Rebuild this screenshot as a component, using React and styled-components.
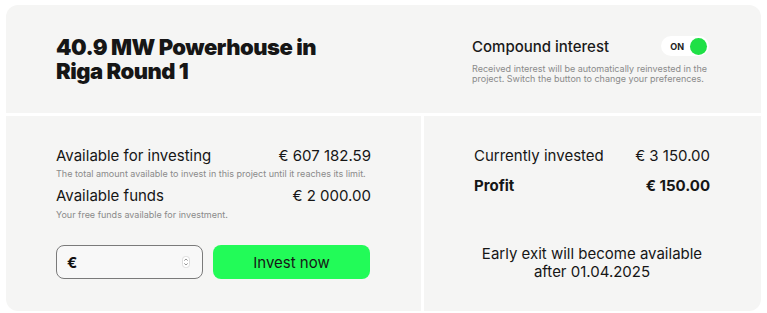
import React, { useState } from "react";
import styled, { createGlobalStyle } from "styled-components";

const GlobalStyle = createGlobalStyle`
  body {
    margin: 0;
    background: #ffffff;
    font-family: "Inter", "Liberation Sans", sans-serif;
    color: #111111;
  }
  * {
    box-sizing: border-box;
  }
`;

const Page = styled.div`
  padding: 5px 6px;
`;

const Card = styled.div`
  display: grid;
  grid-template-columns: 415px 337px;
  grid-template-rows: 108px 195px;
  gap: 3px;
  width: 755px;
  border-radius: 12px;
  overflow: hidden;
`;

const Panel = styled.div`
  background: #f5f5f4;
`;

const TopPanel = styled(Panel)`
  grid-column: 1 / 3;
  display: flex;
  padding: 30px 0 0 50px;
`;

const Title = styled.h1`
  width: 416px;
  margin: 0;
  font-family: "Inter", sans-serif;
  font-weight: 900;
  font-size: 22px;
  line-height: 24px;
  letter-spacing: -0.5px;
  color: #161616;
`;

const Compound = styled.div`
  width: 237px;
  padding-top: 1px;
`;

const CompoundHead = styled.div`
  display: flex;
  align-items: center;
  justify-content: space-between;
`;

const CompoundLabel = styled.span`
  font-size: 15px;
  font-weight: 500;
  color: #1a1a1a;
`;

const Toggle = styled.button`
  display: flex;
  align-items: center;
  gap: 6px;
  height: 20px;
  padding: 0 2px 0 9px;
  border: none;
  border-radius: 10px;
  background: #ffffff;
  font-family: "Inter", sans-serif;
  font-size: 9px;
  font-weight: 700;
  color: #222;
  cursor: pointer;
`;

const Knob = styled.span`
  width: 17px;
  height: 17px;
  border-radius: 50%;
  background: ${(p) => (p.$on ? "#1fe046" : "#c8c8c8")};
`;

const Hint = styled.p`
  margin: ${(p) => p.$gap || "6px"} 0 0;
  font-size: 9px;
  line-height: 10px;
  white-space: nowrap;
  color: #8a8a8a;
`;

const LeftPanel = styled(Panel)`
  padding: 29px 50px 0 50px;
`;

const RightPanel = styled(Panel)`
  display: flex;
  flex-direction: column;
  padding: 29px 51px 0 50px;
`;

const Row = styled.div`
  display: flex;
  justify-content: space-between;
  align-items: center;
  height: 20px;
  margin-top: ${(p) => p.$mt || "0"};
  font-size: 15px;
  font-weight: ${(p) => (p.$bold ? 700 : 400)};
  color: #161616;
`;

const Actions = styled.div`
  display: flex;
  gap: 10px;
  margin-top: 25px;
`;

const AmountBox = styled.label`
  display: flex;
  align-items: center;
  width: 147px;
  height: 34px;
  padding: 0 12px 0 10px;
  border: 1px solid #7a7a7a;
  border-radius: 8px;
  background: #f8f8f8;
  font-size: 15px;
  font-weight: 700;
`;

const AmountInput = styled.input`
  flex: 1;
  min-width: 0;
  border: none;
  background: transparent;
  outline: none;
  font-family: "Inter", sans-serif;
  font-size: 14px;
  margin-left: 6px;
`;

const Spinner = styled.svg`
  flex: none;
`;

const InvestButton = styled.button`
  width: 157px;
  height: 34px;
  border: none;
  border-radius: 8px;
  background: #22fb58;
  font-family: "Inter", sans-serif;
  font-size: 15px;
  color: #161616;
  cursor: pointer;
`;

const ExitNote = styled.p`
  margin: 50px 0 0;
  text-align: center;
  font-size: 15px;
  line-height: 18px;
  color: #161616;
`;

export default function App() {
  const [on, setOn] = useState(true);
  const [amount, setAmount] = useState("");

  return (
    <Page>
      <GlobalStyle />
      <Card>
        <TopPanel>
          <Title>
            40.9 MW Powerhouse in
            <br />
            Riga Round 1
          </Title>
          <Compound>
            <CompoundHead>
              <CompoundLabel>Compound interest</CompoundLabel>
              <Toggle onClick={() => setOn(!on)}>
                {on ? "ON" : "OFF"}
                <Knob $on={on} />
              </Toggle>
            </CompoundHead>
            <Hint $gap="8px">
              Received interest will be automatically reinvested in the
              <br />
              project. Switch the button to change your preferences.
            </Hint>
          </Compound>
        </TopPanel>

        <LeftPanel>
          <Row>
            <span>Available for investing</span>
            <span>€ 607 182.59</span>
          </Row>
          <Hint $gap="4px">
            The total amount available to invest in this project until it
            reaches its limit.
          </Hint>
          <Row $mt="6px">
            <span>Available funds</span>
            <span>€ 2 000.00</span>
          </Row>
          <Hint $gap="5px">Your free funds available for investment.</Hint>
          <Actions>
            <AmountBox>
              €
              <AmountInput
                value={amount}
                onChange={(e) => setAmount(e.target.value)}
              />
              <Spinner width="8" height="12" viewBox="0 0 8 12">
                <rect x="0.5" y="0.5" width="7" height="11" rx="3" fill="#fff" stroke="#ddd" />
                <path d="M2.3 4.6 L4 3 L5.7 4.6 M2.3 7.4 L4 9 L5.7 7.4" fill="none" stroke="#777" strokeWidth="0.8" />
              </Spinner>
            </AmountBox>
            <InvestButton>Invest now</InvestButton>
          </Actions>
        </LeftPanel>

        <RightPanel>
          <Row>
            <span>Currently invested</span>
            <span>€ 3 150.00</span>
          </Row>
          <Row $mt="10px" $bold>
            <span>Profit</span>
            <span>€ 150.00</span>
          </Row>
          <ExitNote>
            Early exit will become available
            <br />
            after 01.04.2025
          </ExitNote>
        </RightPanel>
      </Card>
    </Page>
  );
}
